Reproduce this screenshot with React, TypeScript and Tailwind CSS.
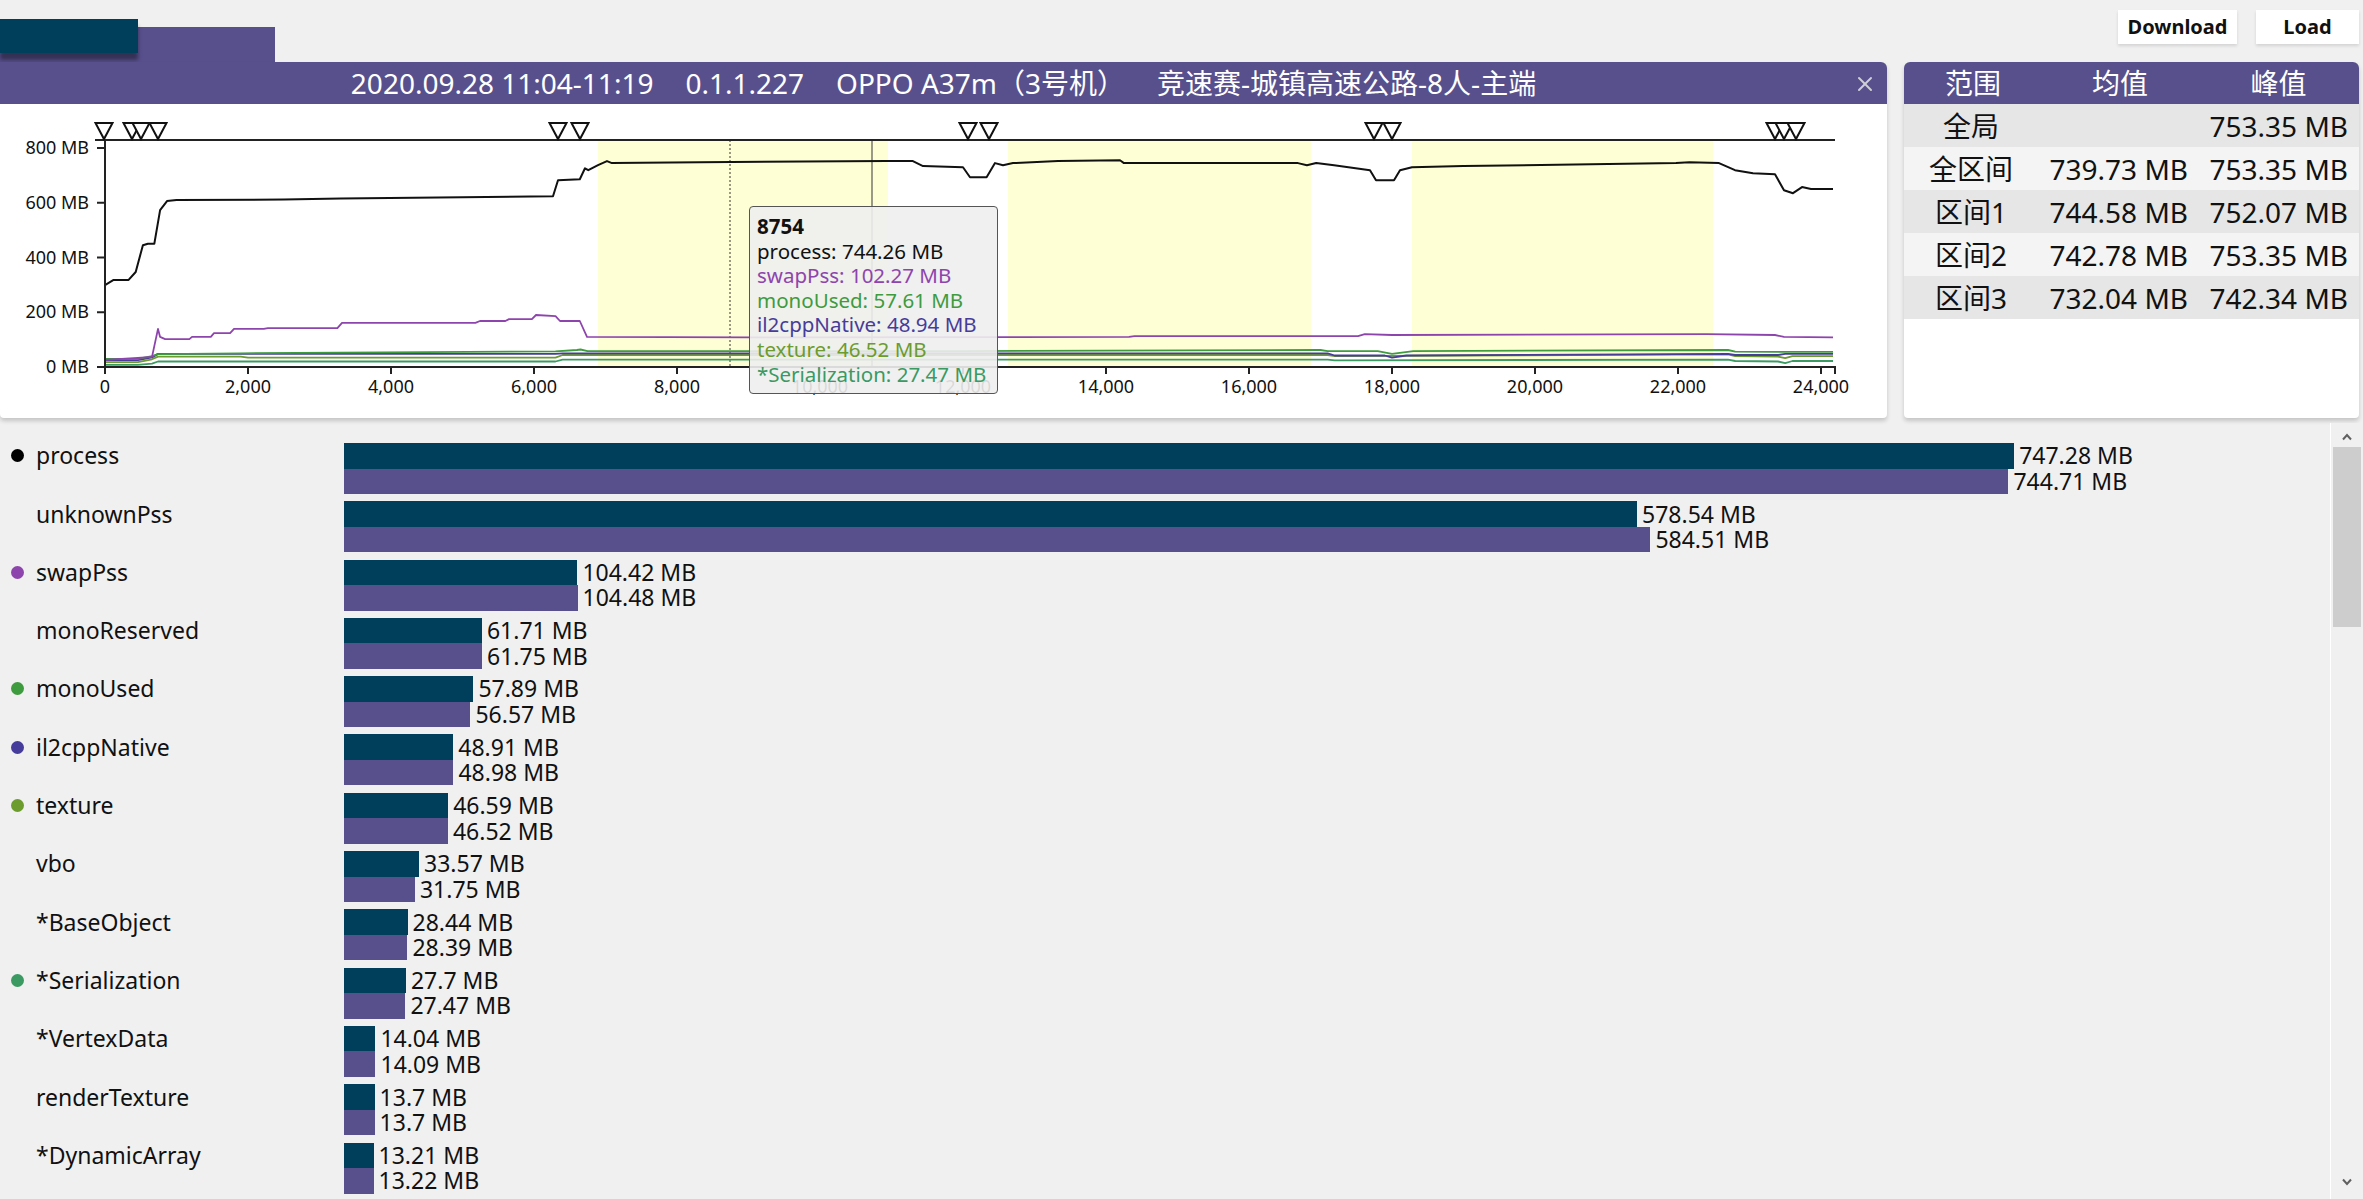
import { X } from "lucide-react";

const DARK = "#003f5c";
const PURPLE = "#58508d";

// chart geometry (svg coords, origin = top-left of the card body)
const X0 = 105;
const XK = 143 / 2000;
const Y0 = 263;
const YK = 219 / 800;

const px = (d: number) => X0 + d * XK;
const py = (mb: number) => Y0 - mb * YK;
const path = (pts: number[][]) => pts.map(([d, mb], i) => `${i ? "L" : "M"}${px(d).toFixed(1)},${py(mb).toFixed(1)}`).join(" ");

const series: { name: string; color: string; pts: number[][] }[] = [
   {
      name: "serialization",
      color: "#3a9a62",
      pts: [[0, 8], [460, 8], [657, 12], [741, 20], [6300, 20], [6400, 27], [17100, 27], [17200, 24], [22700, 27], [22800, 22], [23400, 20], [23500, 14], [23600, 22], [24168, 22]],
   },
   {
      name: "texture",
      color: "#6c9b2e",
      pts: [[0, 18], [460, 18], [657, 28], [741, 38], [1900, 38], [2000, 34], [6300, 34], [6400, 44], [17100, 44], [17200, 40], [22700, 46], [22800, 40], [23400, 38], [23500, 32], [23600, 40], [24168, 40]],
   },
   {
      name: "il2cpp",
      color: "#463c9a",
      pts: [[0, 25], [460, 25], [657, 35], [741, 48], [6300, 48], [6400, 50], [17100, 50], [17200, 42], [17900, 42], [18000, 34], [18200, 42], [22700, 48], [22800, 44], [23400, 44], [23500, 48], [24168, 48]],
   },
   {
      name: "monoUsed",
      color: "#3e9b3e",
      pts: [[0, 30], [460, 30], [657, 40], [741, 47], [1900, 50], [6300, 57], [6600, 62], [6650, 64], [6750, 58], [12000, 58], [17000, 62], [17100, 58], [17800, 58], [18000, 48], [18300, 58], [22700, 62], [22800, 56], [24168, 55]],
   },
   {
      name: "swapPss",
      color: "#8e44ad",
      pts: [[0, 26], [460, 33], [657, 37], [741, 139], [770, 110], [840, 102], [1180, 102], [1217, 110], [1480, 110], [1524, 124], [1750, 124], [1804, 139], [2220, 139], [2280, 142], [3250, 142], [3315, 161], [5180, 161], [5245, 168], [5600, 168], [5650, 175], [5970, 175], [6028, 190], [6300, 186], [6364, 168], [6640, 168], [6741, 110], [9000, 108], [14322, 110], [14400, 113], [17524, 113], [17620, 120], [18000, 117], [22406, 120], [23357, 117], [23483, 110], [24168, 108]],
   },
   {
      name: "process",
      color: "#111111",
      pts: [[0, 299], [120, 318], [330, 318], [430, 347], [530, 445], [600, 450], [690, 450], [770, 573], [867, 606], [1000, 610], [2500, 612], [3300, 615], [5000, 620], [6266, 624], [6336, 682], [6640, 686], [6713, 726], [6760, 719], [6895, 737], [7021, 752], [7090, 745], [8322, 748], [10937, 752], [11300, 752], [11441, 734], [12000, 730], [12098, 693], [12330, 693], [12448, 745], [12560, 737], [12700, 745], [13330, 752], [14196, 755], [14250, 745], [16685, 745], [16810, 737], [16940, 745], [17190, 737], [17692, 719], [17776, 682], [18028, 682], [18112, 719], [18280, 730], [19000, 734], [21972, 745], [22160, 748], [22573, 745], [22797, 719], [23049, 708], [23357, 704], [23483, 646], [23608, 635], [23734, 657], [23860, 650], [24168, 650]],
   },
];

const markers = [104, 132, 141, 158, 558, 580, 968, 989, 1374, 1392, 1775, 1784, 1796];
const bands = [
   [598, 888],
   [1008, 1311],
   [1412, 1713],
];

const tooltip = [
   { text: "process: 744.26 MB", color: "#111111" },
   { text: "swapPss: 102.27 MB", color: "#8e44ad" },
   { text: "monoUsed: 57.61 MB", color: "#3e9b3e" },
   { text: "il2cppNative: 48.94 MB", color: "#463c9a" },
   { text: "texture: 46.52 MB", color: "#6c9b2e" },
   { text: "*Serialization: 27.47 MB", color: "#3a9a62" },
];

const summary = [
   { range: "全局", avg: "", peak: "753.35 MB" },
   { range: "全区间", avg: "739.73 MB", peak: "753.35 MB" },
   { range: "区间1", avg: "744.58 MB", peak: "752.07 MB" },
   { range: "区间2", avg: "742.78 MB", peak: "753.35 MB" },
   { range: "区间3", avg: "732.04 MB", peak: "742.34 MB" },
];

const rows: { name: string; a: number; b: number; dot?: string }[] = [
   { name: "process", a: 747.28, b: 744.71, dot: "#000000" },
   { name: "unknownPss", a: 578.54, b: 584.51 },
   { name: "swapPss", a: 104.42, b: 104.48, dot: "#8e44ad" },
   { name: "monoReserved", a: 61.71, b: 61.75 },
   { name: "monoUsed", a: 57.89, b: 56.57, dot: "#3e9b3e" },
   { name: "il2cppNative", a: 48.91, b: 48.98, dot: "#463c9a" },
   { name: "texture", a: 46.59, b: 46.52, dot: "#6c9b2e" },
   { name: "vbo", a: 33.57, b: 31.75 },
   { name: "*BaseObject", a: 28.44, b: 28.39 },
   { name: "*Serialization", a: 27.7, b: 27.47, dot: "#3a9a62" },
   { name: "*VertexData", a: 14.04, b: 14.09 },
   { name: "renderTexture", a: 13.7, b: 13.7 },
   { name: "*DynamicArray", a: 13.21, b: 13.22 },
];

const BAR_K = 2.235;

function TopBar() {
   return (
      <div className="flex h-[62px] shrink-0 items-start justify-between pr-[4px]">
         <div className="mt-[27px] h-[35px] w-[275px] bg-[#58508d]">
            <div className="-mt-[8px] h-[34px] w-[138px] bg-[#003f5c] shadow-[0_7px_4px_rgba(0,0,0,0.4)]" />
         </div>
         <div className="mt-[10px] flex gap-[19px]">
            <button className="h-[34px] w-[119px] bg-white text-[20px] font-bold shadow-[0_2px_3px_rgba(0,0,0,0.12)]">Download</button>
            <button className="h-[34px] w-[103px] bg-white text-[20px] font-bold shadow-[0_2px_3px_rgba(0,0,0,0.12)]">Load</button>
         </div>
      </div>
   );
}

function Chart() {
   const xticks = Array.from({ length: 13 }, (_, i) => i * 2000);
   const yticks = [0, 200, 400, 600, 800];
   return (
      <div className="relative flex-1">
         <svg viewBox="0 0 1887 314" className="block h-[314px] w-full">
            {bands.map(([a, b]) => (
               <rect key={a} x={a} y={36} width={b - a} height={Y0 - 36} fill="#ffffd6" />
            ))}
            <line x1={730} y1={36} x2={730} y2={Y0} stroke="#333" strokeWidth={1} strokeDasharray="2 2" />
            <line x1={872} y1={36} x2={872} y2={Y0} stroke="#555" strokeWidth={1.2} />
            {series.map(s => (
               <path key={s.name} d={path(s.pts)} fill="none" stroke={s.color} strokeWidth={s.name === "process" ? 2 : 1.8} strokeLinejoin="round" />
            ))}
            <line x1={95} y1={36} x2={1835} y2={36} stroke="#222" strokeWidth={2} />
            <path d={`M97,36 H${X0} V${Y0} H97`} fill="none" stroke="#222" strokeWidth={2} />
            <path d={`M${X0},270 V${Y0} H1835 V270`} fill="none" stroke="#222" strokeWidth={2} />
            {yticks.map(t => (
               <g key={t}>
                  <line x1={97} y1={py(t)} x2={X0} y2={py(t)} stroke="#222" strokeWidth={2} />
                  <text x={89} y={py(t) + 6} textAnchor="end" fontSize={18} fill="#111">
                     {t} MB
                  </text>
               </g>
            ))}
            {xticks.map(t => (
               <g key={t}>
                  <line x1={px(t)} y1={Y0} x2={px(t)} y2={270} stroke="#222" strokeWidth={2} />
                  <text x={px(t)} y={289} textAnchor="middle" fontSize={18} fill="#111">
                     {t.toLocaleString("en-US")}
                  </text>
               </g>
            ))}
            {markers.map((m, i) => (
               <polygon key={i} points={`${m - 8.5},19 ${m + 8.5},19 ${m},35`} fill="white" stroke="#111" strokeWidth={2} />
            ))}
         </svg>

         <div className="absolute left-[749px] top-[102px] w-[249px] rounded-[4px] border-[1.5px] border-[#555] bg-[#eeeeee]/90 px-[7px] py-[7px] text-[20.5px] leading-[24.6px]">
            <div className="font-bold">8754</div>
            {tooltip.map(t => (
               <div key={t.text} style={{ color: t.color }}>
                  {t.text}
               </div>
            ))}
         </div>
      </div>
   );
}

function ChartCard() {
   return (
      <div className="flex flex-1 flex-col overflow-hidden rounded-tr-[6px] rounded-b-[4px] bg-white shadow-[0_3px_4px_rgba(0,0,0,0.18)]">
         <div className="relative flex h-[42px] shrink-0 items-center justify-center gap-[32px] bg-[#58508d] text-[28px] text-white">
            <span>2020.09.28 11:04-11:19</span>
            <span>0.1.1.227</span>
            <span>OPPO A37m（3号机）</span>
            <span>竞速赛-城镇高速公路-8人-主端</span>
            <X className="absolute right-[10px] top-[10px] text-[#cfcfd6]" size={24} strokeWidth={2} />
         </div>
         <Chart />
      </div>
   );
}

function SummaryCard() {
   return (
      <div className="flex w-[455px] flex-col overflow-hidden rounded-t-[6px] rounded-b-[4px] bg-white shadow-[0_3px_4px_rgba(0,0,0,0.18)]">
         <div className="grid h-[42px] shrink-0 grid-cols-[138px_156px_161px] items-center bg-[#58508d] text-center text-[28px] text-white">
            <span>范围</span>
            <span>均值</span>
            <span>峰值</span>
         </div>
         {summary.map((r, i) => (
            <div
               key={r.range}
               className={`grid h-[43px] grid-cols-[134px_150px_160px] items-center pr-[11px] text-[28px] leading-none ${i % 2 === 0 ? "bg-[#e6e6e6]" : "bg-[#f4f4f4]"}`}
            >
               <span className="text-center">{r.range}</span>
               <span className="text-right">{r.avg}</span>
               <span className="text-right">{r.peak}</span>
            </div>
         ))}
      </div>
   );
}

function BarList() {
   return (
      <div className="flex min-h-0 flex-1">
         <div className="flex flex-1 flex-col gap-[7.3px] overflow-hidden pt-[25px]">
            {rows.map(r => (
               <div key={r.name} className="flex h-[51px] shrink-0">
                  <div className="flex h-[25.5px] w-[344px] shrink-0 items-center">
                     <div className="flex w-[36px] justify-center pr-[1px]">
                        {r.dot && <div className="size-[13px] rounded-full" style={{ backgroundColor: r.dot }} />}
                     </div>
                     <span className="text-[23px] leading-none">{r.name}</span>
                  </div>
                  <div className="flex flex-col">
                     {[
                        { v: r.a, c: DARK },
                        { v: r.b, c: PURPLE },
                     ].map((b, i) => (
                        <div key={i} className="flex h-[25.5px] items-center">
                           <div className="h-full" style={{ width: b.v * BAR_K, backgroundColor: b.c }} />
                           <span className="ml-[5px] text-[23px] leading-none">{b.v} MB</span>
                        </div>
                     ))}
                  </div>
               </div>
            ))}
         </div>
         <div className="mt-[5px] flex w-[33px] shrink-0 flex-col items-center border-l border-white bg-[#f0f0f0]">
            <svg width="12" height="8" viewBox="0 0 12 8" className="mt-[10px]">
               <polyline points="2,6.5 6,2 10,6.5" fill="none" stroke="#606060" strokeWidth="2" />
            </svg>
            <div className="mt-[6px] h-[180px] w-[28px] bg-[#cdcdcd]" />
            <div className="flex-1" />
            <svg width="12" height="8" viewBox="0 0 12 8" className="mb-[13px]">
               <polyline points="2,1.5 6,6 10,1.5" fill="none" stroke="#606060" strokeWidth="2" />
            </svg>
         </div>
      </div>
   );
}

export default function App() {
   return (
      <div className="flex h-[1199px] w-[2363px] flex-col overflow-hidden bg-[#f0f0f0] font-['Noto_Sans','Noto_Sans_CJK_SC',sans-serif] text-[#111]">
         <TopBar />
         <div className="flex h-[356px] shrink-0 gap-[17px] pr-[4px]">
            <ChartCard />
            <SummaryCard />
         </div>
         <BarList />
      </div>
   );
}
